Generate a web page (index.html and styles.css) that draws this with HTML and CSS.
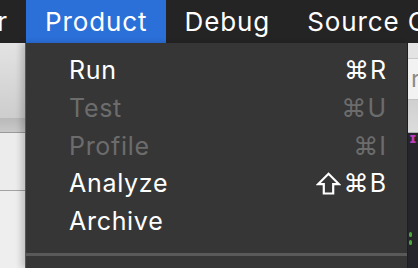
FILE: index.html
```html
<!DOCTYPE html>
<html lang="en">

<head>
    <meta charset="UTF-8">
    <meta name="viewport" content="width=device-width, initial-scale=1.0">
    <title>Product menu</title>
    <link rel="stylesheet" href="styles.css">
</head>

<body>
    <header class="menubar">
        <span class="menubar-item cut"><span>r</span></span>
        <span class="menubar-item active">Product</span>
        <span class="menubar-item">Debug</span>
        <span class="menubar-item">Source Control</span>
    </header>

    <main class="workspace">
        <div class="left-pane">
            <div class="toolbar"></div>
            <div class="tabbar"></div>
            <div class="nav-row"></div>
            <div class="nav-rest"></div>
        </div>
        <div class="center-pane"></div>
        <div class="right-pane">
            <div class="toolbar"></div>
            <div class="field">r</div>
            <div class="tabbar"></div>
            <div class="editor">
                <span class="code-purple">ɪɪ</span>
                <span class="code-dot"></span>
                <span class="code-dot"></span>
            </div>
        </div>

        <ul class="dropdown">
            <li class="menu-item"><span>Run</span><span class="keys">⌘R</span></li>
            <li class="menu-item disabled"><span>Test</span><span class="keys">⌘U</span></li>
            <li class="menu-item disabled"><span>Profile</span><span class="keys">⌘I</span></li>
            <li class="menu-item">
                <span>Analyze</span>
                <span class="keys">
                    <svg class="shift" width="25" height="23" viewBox="0 0 25 23">
                        <path d="M12.5 1.8 L23 12.2 H17.2 V21.5 H7.8 V12.2 H2 Z" fill="none" stroke="#fff" stroke-width="2.2" stroke-linejoin="miter" />
                    </svg>⌘B
                </span>
            </li>
            <li class="menu-item"><span>Archive</span><span class="keys"></span></li>
            <li class="separator"></li>
        </ul>
    </main>
</body>

</html>
```

FILE: styles.css
```css
:root {
    --bar: #242424;
    --blue: #2b6fd8;
    --menu: #363636;
    --text: #ffffff;
    --disabled: #6c6c6c;
    --sep: #595959;
}

* {
    box-sizing: border-box;
    margin: 0;
    padding: 0;
}

body {
    width: 418px;
    height: 268px;
    overflow: hidden;
    font-family: 'Inter', 'DejaVu Sans', sans-serif;
    background-color: #ececec;
    color: var(--text);
}

.menubar {
    display: flex;
    height: 43px;
    background-color: var(--bar);
    white-space: nowrap;
    overflow: hidden;
}

.menubar-item {
    flex-shrink: 0;
    padding: 1px 18px 0 19px;
    font-size: 26px;
    line-height: 42px;
    letter-spacing: 0.9px;
}

.menubar-item.cut {
    display: flex;
    justify-content: flex-end;
    width: 26px;
    padding: 1px 18px 0 0;
    overflow: hidden;
}

.menubar-item.active {
    background-color: var(--blue);
}

.workspace {
    position: relative;
    display: flex;
    height: 225px;
}

.left-pane {
    width: 26px;
    display: flex;
    flex-direction: column;
}

.left-pane .toolbar {
    height: 75px;
    background: linear-gradient(to bottom, #e3e3e3, #cdcdcd);
}

.left-pane .tabbar {
    height: 15px;
    background: linear-gradient(to bottom, #b9b9b9, #c9c9c9);
    border-bottom: 1px solid #9a9a9a;
}

.left-pane .nav-row {
    height: 58px;
    background-color: #ececec;
    border-bottom: 1px solid #a2a2a2;
}

.left-pane .nav-rest {
    flex: 1 1 0%;
    background-color: #eeeeee;
}

.center-pane {
    flex: 1 1 0%;
}

.right-pane {
    width: 10px;
    display: flex;
    flex-direction: column;
}

.right-pane .toolbar {
    height: 16px;
    background-color: #e4e4e4;
    border-bottom: 1px solid #c9c9c9;
}

.right-pane .field {
    height: 40px;
    background-color: #f2f2f2;
    color: #8a8a8a;
    font-size: 24px;
    line-height: 40px;
    padding-left: 3px;
    overflow: hidden;
}

.right-pane .tabbar {
    height: 34px;
    background: linear-gradient(to bottom, #d0d0d0, #dcdcdc);
    border-top: 1px solid #c4c4c4;
    border-bottom: 1px solid #b0b0b0;
}

.right-pane .editor {
    flex: 1 1 0%;
    background-color: #25262c;
    display: flex;
    flex-direction: column;
    padding-left: 1px;
}

.code-purple {
    color: #c03cb8;
    font-size: 14px;
    font-weight: 700;
    line-height: 10px;
    margin-bottom: 89px;
    overflow: hidden;
}

.code-dot {
    width: 3px;
    height: 5px;
    border-radius: 2px;
    background-color: #49a83a;
    margin-bottom: 3px;
}

.dropdown {
    position: absolute;
    top: 0;
    left: 25px;
    width: 383px;
    height: 225px;
    overflow: hidden;
    list-style: none;
    padding: 9px 20px 0 43px;
    background-color: var(--menu);
    border-left: 1px solid #575757;
    border-right: 1px solid #1e1e1e;
    box-shadow: -4px 0 6px rgba(0, 0, 0, 0.18);
}

.menu-item {
    display: flex;
    justify-content: space-between;
    font-size: 25px;
    line-height: 37.8px;
    letter-spacing: 0.7px;
}

.menu-item.disabled {
    color: var(--disabled);
}

.keys {
    display: flex;
    align-items: center;
    letter-spacing: 1px;
}

.shift {
    margin-right: 3px;
    margin-top: -2px;
}

.separator {
    height: 3px;
    margin: 12px -20px 0 -43px;
    background-color: var(--sep);
}
```
